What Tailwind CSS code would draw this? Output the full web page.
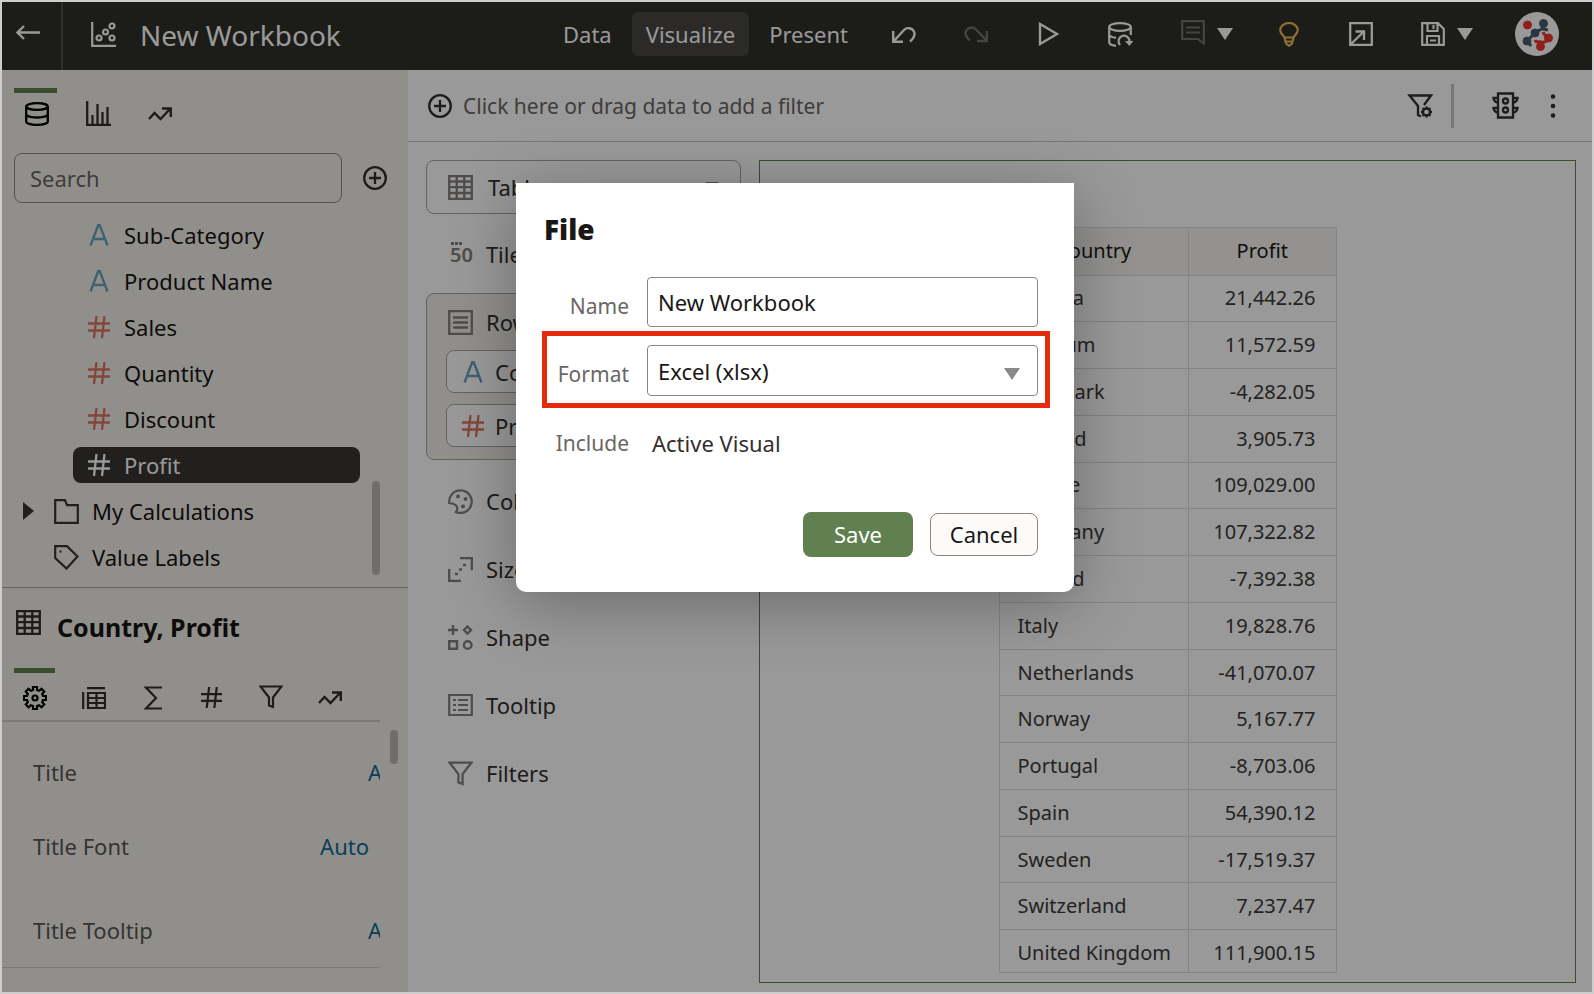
<!DOCTYPE html>
<html lang="en">
  <head>
    <meta charset="UTF-8" />
    <meta name="viewport" content="width=device-width, initial-scale=1.0" />
    <title>New Workbook</title>
    <script src="https://cdn.jsdelivr.net/npm/@tailwindcss/browser@4"></script>
  </head>
  <body class="font-['Noto_Sans','Open_Sans',sans-serif] text-[22px] leading-8 text-[#1a1816]">
    <!-- shared icons -->
    <svg class="hidden">
      <symbol id="i-table" viewBox="0 0 25 25"><path d="M1.200 1.200h22.600v22.600H1.200zM1 6.500h23M1 12.200h23M1 18h23M8.700 1v23M16.300 1v23" fill="none" stroke="currentColor" stroke-width="2.300" /></symbol>
      <symbol id="i-a" viewBox="0 0 20 22"><path d="M1.500 21.500 9.200 1.200h1.600l7.700 20.300M4 15h12" fill="none" stroke="currentColor" stroke-width="2.400" /></symbol>
      <symbol id="i-hash" viewBox="0 0 22 22"><path d="M0 7.500h22M0 14.500h22M8.500 0 6 22M16.500 0 14 22" fill="none" stroke="currentColor" stroke-width="2.300" /></symbol>
      <symbol id="i-trend" viewBox="0 0 24 14"><path d="m1 12 5.500-6 6 6L22 2M14 1.500h8.800V10" fill="none" stroke="currentColor" stroke-width="2.400" /></symbol>
      <symbol id="i-plus" viewBox="0 0 24 24"><path d="M12 6v12M6 12h12" stroke="currentColor" stroke-width="2.300" /><circle cx="12" cy="12" r="10.800" fill="none" stroke="currentColor" stroke-width="2.300" /></symbol>
      <symbol id="i-funnel" viewBox="0 0 24 24"><path d="M1.500 1.500h21L14 12.500V22l-4-1.500v-8z" fill="none" stroke="currentColor" stroke-width="2.200" /></symbol>
      <symbol id="i-caret" viewBox="0 0 16 12"><path d="M0 0h16L8 12z" fill="currentColor" /></symbol>
    </svg>

    <div class="relative flex h-screen flex-col overflow-hidden border-2 border-[#cdcdcd] bg-white">
      <!-- top bar -->
      <header class="flex h-[68px] shrink-0 items-center bg-[#302f2b] text-white">
        <button aria-label="Back" class="flex h-full w-[61px] items-start border-r-2 border-[#53514d] pt-[23px] pl-3.5">
          <svg class="h-[15px] w-6" viewBox="0 0 24 15" fill="none" stroke="currentColor" stroke-width="2.300"><path d="M1.500 7.500H24M8 1 1.500 7.500 8 14" /></svg>
        </button>
        <svg class="mb-1 ml-7 h-[25px] w-[25px]" viewBox="0 0 25 25" fill="none" stroke="currentColor" stroke-width="2.200"><path d="M1.200 0v23.800H25" /><circle cx="8" cy="16" r="2.500" /><circle cx="14.500" cy="10" r="2.500" /><circle cx="21" cy="4" r="2.500" /><circle cx="21" cy="16" r="2.500" /></svg>
        <h1 class="ml-6 pb-0.5 text-[28px]">New Workbook</h1>
        <nav class="ml-auto flex gap-1.5 pb-1">
          <button class="h-11 px-3.5">Data</button>
          <button class="h-11 rounded-md bg-[#484643] px-3.5">Visualize</button>
          <button class="h-11 px-3.5">Present</button>
        </nav>
        <div class="ml-[30px] flex items-center gap-12 pr-[33px] pb-1">
          <button aria-label="Undo"><svg class="h-[17px] w-6" viewBox="0 0 24 17" fill="none" stroke="currentColor" stroke-width="2.400"><path d="M1.200 5v10.800H11M1.500 15.500 12 4a6.300 6.300 0 0 1 10 1.500c1.500 3.500 0 6.500-4 10" /></svg></button>
          <button aria-label="Redo" class="text-[#74726f]"><svg class="h-[17px] w-6" viewBox="0 0 24 17" fill="none" stroke="currentColor" stroke-width="2.400"><path d="M22.800 5v10H13M22.500 14.500 12 3.500A6.300 6.300 0 0 0 2 5c-1.500 3.500 0 6 4 9.500" /></svg></button>
          <button aria-label="Play"><svg class="h-6 w-6" viewBox="0 0 24 24" fill="none" stroke="currentColor" stroke-width="2.400"><path d="M4 2v20l17-10z" /></svg></button>
          <button aria-label="Refresh data"><svg class="h-[25px] w-[25px]" viewBox="0 0 25 25" fill="none" stroke="currentColor" stroke-width="2.200"><ellipse cx="12" cy="5" rx="10.800" ry="3.800" /><path d="M1.200 5v15c0 2 2.800 3.500 6.800 3.800M1.200 13c1 1.500 3.800 2.500 6.800 2.800M22.800 5v8M12 23a5.500 5.500 0 1 1 9.500-3.500v2" /><path d="M17 19h8.500l-4.200 5z" fill="currentColor" stroke="none" /></svg></button>
          <button aria-label="Comments" class="-mr-1 flex items-center gap-3"><svg class="mb-1 h-[25px] w-6 text-[#74726f]" viewBox="0 0 24 25" fill="none" stroke="currentColor" stroke-width="2.200"><path d="M1.200 1.200h21.600v22.300L17 19H1.200zM5 7.500h14M5 12.500h14" /></svg><svg class="h-3 w-4"><use href="#i-caret" /></svg></button>
          <button aria-label="Insights" class="text-[#eeb957]"><svg class="h-[25px] w-6" viewBox="0 0 24 25" fill="none" stroke="currentColor" stroke-width="2.200"><path d="M7.500 15.500C6 12.500 3.200 11.500 3.200 8a8.800 7 0 0 1 17.600 0c0 3.500-2.800 4.500-4.300 7.500zM7.500 15.500l1.500 6 3 2.300 3-2.300 1.500-6M8 19.500h8" /></svg></button>
          <button aria-label="Open in new window"><svg class="h-6 w-6" viewBox="0 0 24 24" fill="none" stroke="currentColor" stroke-width="2.300"><path d="M1.200 1.200h21.600v21.600H1.200zM1.500 22.500 15 9.500M6.500 9.500H15V18" /></svg></button>
          <button aria-label="Save menu" class="-mr-1.5 flex items-center gap-3"><svg class="h-6 w-6" viewBox="0 0 24 24" fill="none" stroke="currentColor" stroke-width="2.200"><path d="M1.200 1.200H17l5.800 5.800v15.800H1.200zM6.500 1v8h10V1M12.500 3v4M6 23v-9h12v9M9 18.500h6" /></svg><svg class="h-3 w-4"><use href="#i-caret" /></svg></button>
          <button aria-label="Account"><svg class="h-11 w-11" viewBox="0 0 44 44"><circle cx="22" cy="22" r="22" fill="#fff" /><g fill="#435c6e" stroke="#435c6e"><path d="M28 11v6l5 1M28 16l-8 5-8 8 4 5" fill="none" stroke-width="3" /><circle cx="28.500" cy="11.500" r="4" /><circle cx="20" cy="21" r="4" /><circle cx="12" cy="29" r="4" /></g><g fill="#ee352d" stroke="#ee352d"><circle cx="12.500" cy="13" r="4" /><path d="M28 20c1 3 3 4 5 6-1 3-3 5-7 4s-5 1-6-2" fill="none" stroke-width="3" /><circle cx="33.500" cy="26" r="4" /><circle cx="25.500" cy="34.500" r="4" /></g></svg></button>
        </div>
      </header>

      <div class="flex min-h-0 flex-1">
        <!-- data panel -->
        <aside class="flex w-[406px] shrink-0 flex-col bg-[#f2efea] text-[#32302d]">
          <div class="flex gap-[19px] pt-[18px] pl-3">
            <button aria-label="Data" class="flex h-[43px] w-[43px] items-center justify-center border-t-[5px] border-[#62824e] pt-1 pl-0.5 text-black"><svg class="h-6 w-6 shrink-0" viewBox="0 0 24 24" fill="none" stroke="currentColor" stroke-width="2.300"><ellipse cx="12" cy="4.500" rx="10.800" ry="3.300" /><path d="M1.200 4.500v15c0 2 4.800 3.300 10.800 3.300s10.800-1.300 10.800-3.300v-15M1.200 12c0 2 4.800 3.500 10.800 3.500S22.800 14 22.800 12" /></svg></button>
            <button aria-label="Visualizations" class="flex h-[43px] w-[43px] items-center justify-center pt-2 pl-0.5"><svg class="h-[25px] w-[25px] shrink-0" viewBox="0 0 25 25" fill="none" stroke="currentColor" stroke-width="2.300"><path d="M1.200 0v23.800H25M6.500 24V14M11.500 24V3M16.500 24V11M21.500 24V6" /></svg></button>
            <button aria-label="Analytics" class="flex h-[43px] w-[43px] items-center justify-center pt-2"><svg class="h-3.5 w-6 shrink-0"><use href="#i-trend" /></svg></button>
          </div>
          <div class="mt-[22px] flex items-center gap-[21px] pl-3">
            <input type="text" aria-label="Search" placeholder="Search" class="h-[50px] w-[328px] rounded-lg border border-[#8b8580] px-[15px] placeholder:text-[#6a6763]" />
            <button aria-label="Add data"><svg class="h-6 w-6"><use href="#i-plus" /></svg></button>
          </div>

          <div class="mt-[9px] flex border-b border-[#a9a5a0] pb-[7px]">
            <ul class="w-[358px] text-[#161513]">
              <li class="flex h-[46px] items-center gap-[15px] pl-[87px]"><svg class="h-[22px] w-5 text-[#6aa3bb]"><use href="#i-a" /></svg>Sub-Category</li>
              <li class="flex h-[46px] items-center gap-[15px] pl-[87px]"><svg class="h-[22px] w-5 text-[#6aa3bb]"><use href="#i-a" /></svg>Product Name</li>
              <li class="flex h-[46px] items-center gap-3.5 pl-[86px]"><svg class="h-[22px] w-[22px] text-[#dc7561]"><use href="#i-hash" /></svg>Sales</li>
              <li class="flex h-[46px] items-center gap-3.5 pl-[86px]"><svg class="h-[22px] w-[22px] text-[#dc7561]"><use href="#i-hash" /></svg>Quantity</li>
              <li class="flex h-[46px] items-center gap-3.5 pl-[86px]"><svg class="h-[22px] w-[22px] text-[#dc7561]"><use href="#i-hash" /></svg>Discount</li>
              <li class="flex h-[46px] items-center pl-[71px]"><span class="flex h-9 flex-1 items-center gap-3.5 rounded-lg bg-[#383632] pl-[15px] text-white"><svg class="h-[22px] w-[22px]"><use href="#i-hash" /></svg>Profit</span></li>
              <li class="flex h-[46px] items-center pl-[21px]">
                <svg class="h-5 w-3" viewBox="0 0 12 20"><path d="M0 1v18l11-9z" fill="#383632" /></svg>
                <svg class="mr-[13px] ml-[19px] h-[25px] w-[25px]" viewBox="0 0 25 25" fill="none" stroke="#383632" stroke-width="2.200"><path d="M1.200 1.200H11l2 5h10.800v17.600H1.200z" /></svg>My Calculations
              </li>
              <li class="flex h-[46px] items-center pl-[52px]">
                <svg class="mr-[13px] h-[25px] w-[25px]" viewBox="0 0 25 25" fill="none" stroke="#383632" stroke-width="2.200"><path d="M1.200 1.200H13l10.500 10.300-11 12L1.200 13z" /><path d="M5.500 6.500h2" /></svg>Value Labels
              </li>
            </ul>
            <div class="mt-auto mb-[5px] ml-3 h-[94px] w-2 rounded-full bg-[#bab7b1]"></div>
          </div>

          <div class="flex h-20 items-center gap-4 pb-[3px] pl-3.5">
            <svg class="mb-2 h-[25px] w-[25px]"><use href="#i-table" /></svg>
            <h2 class="text-[25px] font-bold text-[#161513]">Country, Profit</h2>
          </div>
          <div class="flex h-[54px] w-[378px] shrink-0 gap-[18px] border-b-2 border-[#d0cdc8] pl-3">
            <button aria-label="General" class="flex w-[41px] justify-center border-t-[5px] border-[#62824e] pt-[13px] text-black"><svg class="h-6 w-6" viewBox="0 0 24 24" fill="none" stroke="currentColor" stroke-width="2.200"><path d="M10 1h4v3l2 .8 2.500-2 2.700 2.700-2 2.500.8 2h3v4h-3l-.8 2 2 2.500-2.700 2.700-2.500-2-2 .8v3h-4v-3l-2-.8-2.500 2-2.700-2.700 2-2.500L4 14H1v-4h3l.8-2-2-2.500 2.700-2.700 2.500 2 2-.8z" /><circle cx="12" cy="12" r="2.500" /></svg></button>
            <button aria-label="Grid" class="flex w-[41px] justify-center pt-[19px]"><svg class="h-[22px] w-6" viewBox="0 0 24 22" fill="none" stroke="currentColor" stroke-width="2.200"><path d="M1.200 5v17M5 1.200h18M6 6h17v15H6zM6 11h17M6 16h17M14.500 6v15" /></svg></button>
            <button aria-label="Totals" class="flex w-[41px] justify-center pt-[18px]"><svg class="h-6 w-5" viewBox="0 0 20 24" fill="none" stroke="currentColor" stroke-width="2.200"><path d="M19 1.500H3L13 12 3 22.500h16" /></svg></button>
            <button aria-label="Values" class="flex w-[41px] justify-center pt-[19px]"><svg class="h-[21px] w-[21px]"><use href="#i-hash" /></svg></button>
            <button aria-label="Filter" class="flex w-[41px] justify-center pt-[17px]"><svg class="h-6 w-6"><use href="#i-funnel" /></svg></button>
            <button aria-label="Analytics" class="flex w-[41px] justify-center pt-[23px]"><svg class="h-3.5 w-6"><use href="#i-trend" /></svg></button>
          </div>
          <div class="flex">
            <dl class="w-[378px] border-b border-[#d0cdc8] pt-[34px] pb-[21px] text-[#5a5753]">
              <div class="mb-[42px] flex justify-between overflow-hidden pl-[31px]"><dt>Title</dt><dd class="w-3 whitespace-nowrap text-[#0f6a96]">Auto</dd></div>
              <div class="mb-[52px] flex justify-between pr-[11px] pl-[31px]"><dt>Title Font</dt><dd class="text-[#0f6a96]">Auto</dd></div>
              <div class="flex justify-between overflow-hidden pl-[31px]"><dt>Title Tooltip</dt><dd class="w-3 whitespace-nowrap text-[#0f6a96]">Auto</dd></div>
            </dl>
            <div class="mt-2 ml-2.5 h-[34px] w-2 rounded-full bg-[#bab7b1]"></div>
          </div>
        </aside>

        <main class="flex min-w-0 flex-1 flex-col">
          <!-- filter bar -->
          <div class="flex h-[72px] shrink-0 items-center border-b border-[#c9c7c5] pr-[35px] pl-5 text-[#32302d]">
            <button class="flex items-center gap-[11px] text-[21px] text-[#6a6763]"><svg class="h-6 w-6 text-[#32302d]"><use href="#i-plus" /></svg>Click here or drag data to add a filter</button>
            <button aria-label="Filter settings" class="ml-auto"><svg class="h-6 w-[26px]" viewBox="0 0 26 24" fill="none" stroke="currentColor" stroke-width="2.300"><path d="M17 11l7-9.500H2.500L11 12v9l3 1.500" /><circle cx="19.500" cy="18" r="3.500" /><path d="M19.500 12.500v2M19.500 21.500v2M14 18h2M23 18h2M15.600 14.100l1.400 1.400M22 20.500l1.400 1.400M15.600 21.900l1.400-1.400M22 15.500l1.400-1.400" /></svg></button>
            <div class="ml-[18px] h-11 w-[3px] bg-[#c9c7c5]"></div>
            <button aria-label="Performance" class="ml-[38px]"><svg class="h-[27px] w-[27px]" viewBox="0 0 27 27" fill="none" stroke="currentColor" stroke-width="2.300"><path d="M6 1.500h15v24H6zM6 6H1.500c0 3 2 4 4.500 5M6 16H1.500c0 3 2 4 4.500 5M21 6h4.500c0 3-2 4-4.500 5M21 16h4.500c0 3-2 4-4.500 5" /><circle cx="13.500" cy="9" r="2.500" /><circle cx="13.500" cy="18" r="2.500" /></svg></button>
            <button aria-label="More" class="ml-[30px]"><svg class="h-6 w-2" viewBox="0 0 8 24" fill="currentColor"><circle cx="4" cy="2.500" r="2.300" /><circle cx="4" cy="12" r="2.300" /><circle cx="4" cy="21.500" r="2.300" /></svg></button>
          </div>

          <div class="flex min-h-0 flex-1 gap-[18px] pt-[18px] pr-4 pb-[9px] pl-[18px]">
            <!-- grammar panel -->
            <div class="w-[315px] shrink-0 text-[#32302d]">
              <button class="flex h-[54px] w-full items-center rounded-lg border border-[#a9a5a0] px-[21px] text-left"><svg class="h-[25px] w-[25px] text-[#84817d]"><use href="#i-table" /></svg><span class="ml-[15px] flex-1">Table</span><svg class="h-2.5 w-3.5 text-[#84817d]" viewBox="0 0 16 12"><path d="M0 0h16L8 12z" fill="currentColor" /></svg></button>
              <div class="flex h-[79px] items-center gap-[13px] pl-6 text-[#32302d]">
                <span class="flex flex-col text-[20px] leading-5 font-semibold text-[#84817d]"><svg class="h-[3px] w-3" viewBox="0 0 12 3" fill="currentColor"><path d="M1 0h3v3H1zM5 0h3v3H5zM9 0h3v3H9z" /></svg>50</span>Tile
              </div>
              <div class="rounded-lg border border-[#a9a5a0] bg-[#f2efea] px-[19px] pb-3">
                <div class="flex h-14 items-center gap-[13px] pl-[2px]"><svg class="h-[25px] w-[25px] text-[#84817d]" viewBox="0 0 25 25" fill="none" stroke="currentColor" stroke-width="2.300"><path d="M1.200 1.200h22.600v22.600H1.200zM5 7.500h15M5 12.500h15M5 17.500h15" /></svg>Rows</div>
                <div class="mb-[11px] flex h-[43px] items-center gap-3 rounded-lg border border-[#a9a5a0] bg-white pl-4"><svg class="h-[22px] w-5 text-[#6aa3bb]"><use href="#i-a" /></svg>Country</div>
                <div class="flex h-[43px] items-center gap-[11px] rounded-lg border border-[#a9a5a0] bg-white pl-[15px]"><svg class="h-[22px] w-[22px] text-[#dc7561]"><use href="#i-hash" /></svg>Profit</div>
              </div>
              <ul class="pt-[7px] pl-[22px]">
                <li class="flex h-[68px] items-center gap-[13px]"><svg class="h-[25px] w-[25px] text-[#84817d]" viewBox="0 0 25 25" fill="none" stroke="currentColor" stroke-width="2.200"><path d="M1.200 14A11.300 11.300 0 1 1 8 23c1.500-2 2-3.500.5-6S4 14.500 1.200 14z" /><g fill="currentColor" stroke="none"><circle cx="10" cy="7.500" r="2" /><circle cx="17.500" cy="10" r="2" /><circle cx="15" cy="17.500" r="2" /></g></svg>Color</li>
                <li class="flex h-[68px] items-center gap-[13px]"><svg class="h-[25px] w-[25px] text-[#84817d]" viewBox="0 0 25 25" fill="none" stroke="currentColor" stroke-width="2.300"><path d="M12 1.200h11.800V13M1.200 12v11.800H13" /><path d="M7 17h3M11 12.500h3M15 8h3" /></svg>Size</li>
                <li class="flex h-[68px] items-center gap-[13px]"><svg class="h-[25px] w-[25px] text-[#84817d]" viewBox="0 0 25 25" fill="none" stroke="currentColor" stroke-width="2.400"><path d="M5 0v10M0 5h10M19.500 1.500 23 5l-3.500 3.500L16 5zM1.200 16.200H9v7.600H1.200z" /><circle cx="19.700" cy="20" r="3.800" /></svg>Shape</li>
                <li class="flex h-[68px] items-center gap-[13px]"><svg class="h-[25px] w-[25px] text-[#84817d]" viewBox="0 0 25 25" fill="none" stroke="currentColor" stroke-width="2.200"><path d="M1.200 2h22.600v20H1.200zM5 7h3M10 7h10M5 12h3M10 12h10M5 17h3M10 17h10" /></svg>Tooltip</li>
                <li class="flex h-[68px] items-center gap-[13px]"><svg class="h-[25px] w-[25px] text-[#84817d]"><use href="#i-funnel" /></svg>Filters</li>
              </ul>
            </div>

            <!-- canvas -->
            <section class="flex flex-1 items-start justify-center border border-[#62824e] pt-[66px]">
              <div class="h-[746px] w-[338px] overflow-hidden border border-[#dedcda]">
                <table class="h-[749px] w-[336px] table-fixed border-collapse text-[20px] leading-7 text-[#3c3a37]">
                  <thead>
                    <tr class="h-[47px] border-b border-[#dedcda] bg-[#f5f4f0] text-[#1a1816]">
                      <th class="w-[189px] border-r border-[#dedcda] font-normal">Country</th>
                      <th class="font-normal">Profit</th>
                    </tr>
                  </thead>
                  <tbody class="[&_td]:border-b [&_td]:border-[#dedcda] [&_td:first-child]:border-r [&_td:first-child]:pl-[18px] [&_td:last-child]:pr-5 [&_td:last-child]:text-right">
                    <tr><td>Austria</td><td>21,442.26</td></tr>
                    <tr><td>Belgium</td><td>11,572.59</td></tr>
                    <tr><td>Denmark</td><td>-4,282.05</td></tr>
                    <tr><td>Finland</td><td>3,905.73</td></tr>
                    <tr><td>France</td><td>109,029.00</td></tr>
                    <tr><td>Germany</td><td>107,322.82</td></tr>
                    <tr><td>Ireland</td><td>-7,392.38</td></tr>
                    <tr><td>Italy</td><td>19,828.76</td></tr>
                    <tr><td>Netherlands</td><td>-41,070.07</td></tr>
                    <tr><td>Norway</td><td>5,167.77</td></tr>
                    <tr><td>Portugal</td><td>-8,703.06</td></tr>
                    <tr><td>Spain</td><td>54,390.12</td></tr>
                    <tr><td>Sweden</td><td>-17,519.37</td></tr>
                    <tr><td>Switzerland</td><td>7,237.47</td></tr>
                    <tr><td>United Kingdom</td><td>111,900.15</td></tr>
                  </tbody>
                </table>
              </div>
            </section>
          </div>
        </main>
      </div>

      <!-- export dialog -->
      <div class="absolute inset-0 flex items-start justify-center bg-black/40 pt-[181px] pr-1">
        <form role="dialog" aria-labelledby="dialogTitle" class="w-[558px] rounded-b-[10px] bg-white pr-9 pb-[35px] pl-7 shadow-[0_12px_64px_rgba(0,0,0,0.3)]">
          <h2 id="dialogTitle" class="pt-[26px] text-[28px] leading-10 font-black">File</h2>
          <div class="mt-7 flex h-[50px] gap-[18px]">
            <label for="name" class="w-[85px] pt-[13px] text-right text-[21px] text-[#6a6763]">Name</label>
            <input id="name" type="text" value="New Workbook" class="min-w-0 flex-1 rounded-[4px] border border-[#8b8580] px-2.5" />
          </div>
          <div class="relative mt-[18px] flex h-[51px] gap-[18px]">
            <label for="format" class="w-[85px] pt-[13px] text-right text-[21px] text-[#6a6763]">Format</label>
            <select id="format" class="min-w-0 flex-1 appearance-none rounded-[4px] border border-[#8b8580] px-2.5">
              <option>Excel (xlsx)</option>
            </select>
            <svg class="pointer-events-none absolute top-[23px] right-[18px] h-3 w-4 text-[#8a8a8c]"><use href="#i-caret" /></svg>
            <div class="pointer-events-none absolute -top-3.5 -right-3 -bottom-3 -left-0.5 border-5 border-[#e62a0c]"></div>
          </div>
          <div class="mt-[18px] flex h-[50px] gap-[23px] pt-[13px]">
            <span class="w-[85px] text-right text-[21px] text-[#6a6763]">Include</span>
            <span class="text-[#32302d]">Active Visual</span>
          </div>
          <div class="mt-12 flex items-center justify-end gap-[17px]">
            <button type="button" class="h-[45px] w-[110px] rounded-lg bg-[#60804f] pb-0.5 text-white">Save</button>
            <button type="button" class="h-[43px] w-[108px] rounded-lg border border-[#8b8580] bg-[#fcfbfa] pb-0.5">Cancel</button>
          </div>
        </form>
      </div>
    </div>
  </body>
</html>
